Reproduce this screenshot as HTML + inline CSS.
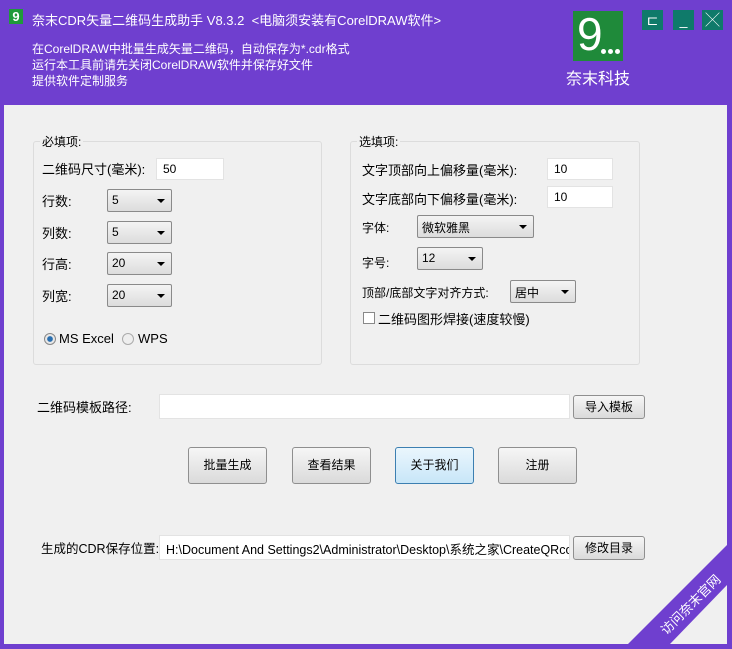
<!DOCTYPE html>
<html><head><meta charset="utf-8"><style>
*{margin:0;padding:0;box-sizing:border-box}
body{width:732px;height:649px;background:#6f3fcf;font-family:"Liberation Sans","Noto Sans CJK SC",sans-serif;font-size:12px;color:#000;position:relative;overflow:hidden}
.a{position:absolute}
.w{color:#fff}
.main{position:absolute;left:4px;top:105px;width:723px;height:539px;background:#f0f0f0;overflow:hidden}
.grp{position:absolute;border:1px solid #dcdcdc;border-radius:3px}
.grp .t{position:absolute;top:-9px;left:6px;background:#f0f0f0;padding:0 2px}
.in{position:absolute;background:#fff;border:1px solid #e3e3e3;height:22px;padding:3px 6px;font-size:12px}
.sel{position:absolute;height:23px;border:1px solid #8a8a8a;border-radius:2px;background:linear-gradient(#f4f4f4,#dcdcdc);padding:3px 4px;font-size:12px}
.sel:after{content:"";position:absolute;right:6px;top:9px;border-left:4px solid transparent;border-right:4px solid transparent;border-top:4px solid #000}
.btn{position:absolute;border:1px solid #8f8f8f;border-radius:3px;background:linear-gradient(#f6f6f6,#dadada);text-align:center;font-size:12px}
.tb{position:absolute;top:10px;width:21px;height:20px;background:#0f7a6a;color:#fff;text-align:center;font-size:14px;line-height:20px}
.dot{position:absolute;width:5px;height:5px;border-radius:50%;background:#fff;top:38px}
</style></head><body>
<div class="a" style="left:9px;top:9px;width:14px;height:15px;background:#1f9a3a;color:#fff;font-size:13px;line-height:15px;text-align:center;font-weight:bold">9</div>
<div class="a w" style="left:32px;top:10px;font-size:13px">奈末CDR矢量二维码生成助手 V8.3.2 &nbsp;&lt;电脑须安装有CorelDRAW软件&gt;</div>
<div class="a w" style="left:32px;top:41px;line-height:16px;font-size:12px">在CorelDRAW中批量生成矢量二维码，自动保存为*.cdr格式<br>运行本工具前请先关闭CorelDRAW软件并保存好文件<br>提供软件定制服务</div>
<div class="a" style="left:573px;top:11px;width:50px;height:50px;background:#1f8a3a;color:#fff;font-size:46px;line-height:46px;padding-left:4px">9<span class="dot" style="left:28px"></span><span class="dot" style="left:35px"></span><span class="dot" style="left:42px"></span></div>
<div class="a w" style="left:566px;top:65px;font-size:16px">奈末科技</div>
<div class="tb" style="left:642px">⊏</div>
<div class="tb" style="left:673px">_</div>
<div class="tb" style="left:702px">╳</div>
<div class="main">
<div class="grp" style="left:29px;top:36px;width:289px;height:224px"><span class="t">必填项:</span></div>
<div class="a" style="left:38px;top:54px;font-size:13px">二维码尺寸(毫米):</div>
<div class="in" style="left:152px;top:53px;width:68px">50</div>
<div class="a" style="left:38px;top:86px;font-size:13px">行数:</div><div class="sel" style="left:103px;top:84px;width:65px">5</div>
<div class="a" style="left:38px;top:118px;font-size:13px">列数:</div><div class="sel" style="left:103px;top:116px;width:65px">5</div>
<div class="a" style="left:38px;top:149px;font-size:13px">行高:</div><div class="sel" style="left:103px;top:147px;width:65px">20</div>
<div class="a" style="left:38px;top:181px;font-size:13px">列宽:</div><div class="sel" style="left:103px;top:179px;width:65px">20</div>
<div class="a" style="left:40px;top:228px;width:12px;height:12px;border-radius:50%;border:1px solid #888;background:radial-gradient(#2a6fb0 35%,#e8e8e8 45%)"></div>
<div class="a" style="left:55px;top:226px;font-size:13px">MS Excel</div>
<div class="a" style="left:118px;top:228px;width:12px;height:12px;border-radius:50%;border:1px solid #aaa;background:#eee"></div>
<div class="a" style="left:134px;top:226px;font-size:13px">WPS</div>
<div class="grp" style="left:346px;top:36px;width:290px;height:224px"><span class="t">选填项:</span></div>
<div class="a" style="left:358px;top:55px;font-size:13px">文字顶部向上偏移量(毫米):</div>
<div class="in" style="left:543px;top:53px;width:66px">10</div>
<div class="a" style="left:358px;top:84px;font-size:13px">文字底部向下偏移量(毫米):</div>
<div class="in" style="left:543px;top:81px;width:66px">10</div>
<div class="a" style="left:358px;top:114px">字体:</div><div class="sel" style="left:413px;top:110px;width:117px">微软雅黑</div>
<div class="a" style="left:358px;top:149px">字号:</div><div class="sel" style="left:413px;top:142px;width:66px">12</div>
<div class="a" style="left:358px;top:179px">顶部/底部文字对齐方式:</div><div class="sel" style="left:506px;top:175px;width:66px">居中</div>
<div class="a" style="left:359px;top:207px;width:12px;height:12px;border:1px solid #888;background:#fff"></div>
<div class="a" style="left:374px;top:204px;font-size:13px">二维码图形焊接(速度较慢)</div>
<div class="a" style="left:33px;top:292px;font-size:13px">二维码模板路径:</div>
<div class="in" style="left:155px;top:289px;width:411px;height:25px"></div>
<div class="btn" style="left:569px;top:290px;width:72px;height:24px;line-height:22px">导入模板</div>
<div class="btn" style="left:184px;top:342px;width:79px;height:37px;line-height:35px">批量生成</div>
<div class="btn" style="left:288px;top:342px;width:79px;height:37px;line-height:35px">查看结果</div>
<div class="btn" style="left:391px;top:342px;width:79px;height:37px;line-height:35px;border-color:#3c7fb1;background:linear-gradient(#eaf6fd,#c8e6f8)">关于我们</div>
<div class="btn" style="left:494px;top:342px;width:79px;height:37px;line-height:35px">注册</div>
<div class="a" style="left:37px;top:433px;font-size:12.5px">生成的CDR保存位置:</div>
<div class="in" style="left:155px;top:430px;width:411px;height:25px;overflow:hidden;white-space:nowrap;font-size:12.5px">H:\Document And Settings2\Administrator\Desktop\系统之家\CreateQRcode</div>
<div class="btn" style="left:569px;top:431px;width:72px;height:24px;line-height:22px">修改目录</div>
</div>
<svg class="a" style="left:0;top:0" width="732" height="649"><polygon points="727,545 727,585 670,644 628,644" fill="#6f3fcf"/></svg>
<div class="a w" style="left:690px;top:604px;font-size:13px;transform:translate(-50%,-50%) rotate(-45deg);white-space:nowrap">访问奈末官网</div>
</body></html>
